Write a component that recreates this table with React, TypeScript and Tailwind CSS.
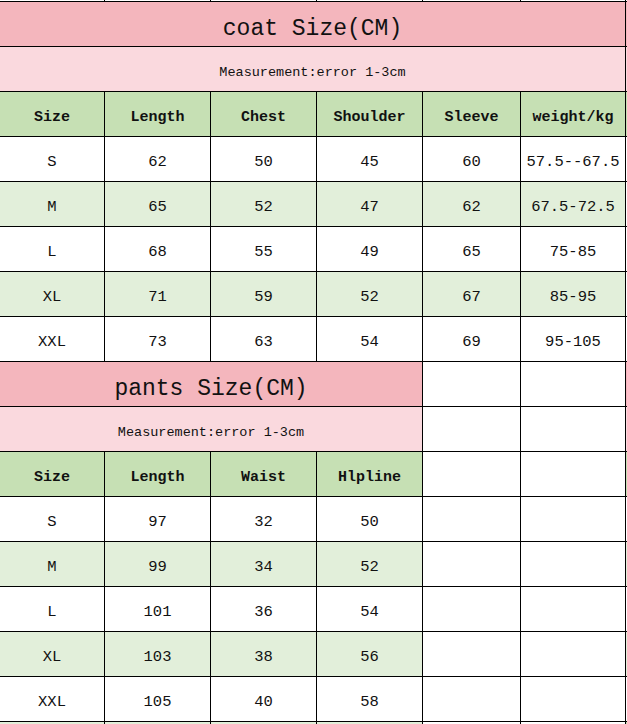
import React from 'react';

const mono = { fontFamily: '"Liberation Mono", "DejaVu Sans Mono", monospace' };

const PINK = 'bg-[#f4b6bd]';
const LIGHT_PINK = 'bg-[#fad9de]';
const GREEN = 'bg-[#c6e0b4]';
const LIGHT_GREEN = 'bg-[#e2efda]';

const coatHead = ['Size', 'Length', 'Chest', 'Shoulder', 'Sleeve', 'weight/kg'];
const coatRows = [
  ['S', '62', '50', '45', '60', '57.5--67.5'],
  ['M', '65', '52', '47', '62', '67.5-72.5'],
  ['L', '68', '55', '49', '65', '75-85'],
  ['XL', '71', '59', '52', '67', '85-95'],
  ['XXL', '73', '63', '54', '69', '95-105'],
];

const pantsHead = ['Size', 'Length', 'Waist', 'Hlpline'];
const pantsRows = [
  ['S', '97', '32', '50'],
  ['M', '99', '34', '52'],
  ['L', '101', '36', '54'],
  ['XL', '103', '38', '56'],
  ['XXL', '105', '40', '58'],
];

function Cell({ children, className = '' }: { children?: React.ReactNode; className?: string }) {
  return (
    <div className={`flex items-center justify-center text-[#111] ${className}`}>{children}</div>
  );
}

export default function App() {
  return (
    <div
      className="grid w-[627px] h-[724px] overflow-hidden gap-px bg-black"
      style={{ ...mono, gridTemplateColumns: '104px 105px 105px 105px 97px 104px 1px', gridTemplateRows: '1px repeat(16, 44px) 2px' }}
    >
      {/* sliver of the row above */}
      {Array.from({ length: 7 }).map((_, i) => (
        <div key={'top' + i} className="bg-white" />
      ))}

      {/* coat */}
      <Cell className={`col-span-6 ${PINK} text-[23px] pt-[10px]`}>coat Size(CM)</Cell>
      <div className={PINK} />
      <Cell className={`col-span-6 ${LIGHT_PINK} text-[13.5px] pt-[9px]`}>Measurement:error 1-3cm</Cell>
      <div className={LIGHT_PINK} />
      {coatHead.map((h) => (
        <Cell key={h} className={`${GREEN} font-bold text-[15px] pt-[9px]`}>{h}</Cell>
      ))}
      <div className={GREEN} />
      {coatRows.map((r, i) => (
        <React.Fragment key={'c' + i}>
          {r.map((v, j) => (
            <Cell key={j} className={`${i % 2 ? LIGHT_GREEN : 'bg-white'} text-[15.5px] pt-[8px]`}>{v}</Cell>
          ))}
          <div className="bg-white" />
        </React.Fragment>
      ))}

      {/* pants */}
      <Cell className={`col-span-4 ${PINK} text-[23px] pt-[10px]`}>pants Size(CM)</Cell>
      <div className="bg-white" />
      <div className="bg-white" />
      <div className={PINK} />
      <Cell className={`col-span-4 ${LIGHT_PINK} text-[13.5px] pt-[9px]`}>Measurement:error 1-3cm</Cell>
      <div className="bg-white" />
      <div className="bg-white" />
      <div className={LIGHT_PINK} />
      {pantsHead.map((h) => (
        <Cell key={h} className={`${GREEN} font-bold text-[15px] pt-[9px]`}>{h}</Cell>
      ))}
      <div className="bg-white" />
      <div className="bg-white" />
      <div className={GREEN} />
      {pantsRows.map((r, i) => (
        <React.Fragment key={'p' + i}>
          {r.map((v, j) => (
            <Cell key={j} className={`${i % 2 ? LIGHT_GREEN : 'bg-white'} text-[15.5px] pt-[8px]`}>{v}</Cell>
          ))}
          <div className="bg-white" />
          <div className="bg-white" />
          <div className={i % 2 ? LIGHT_GREEN : 'bg-white'} />
        </React.Fragment>
      ))}

      {/* start of next row */}
      {[LIGHT_GREEN, LIGHT_GREEN, LIGHT_GREEN, LIGHT_GREEN, 'bg-white', 'bg-white', GREEN].map((c, i) => (
        <div key={'b' + i} className={c} />
      ))}
    </div>
  );
}
